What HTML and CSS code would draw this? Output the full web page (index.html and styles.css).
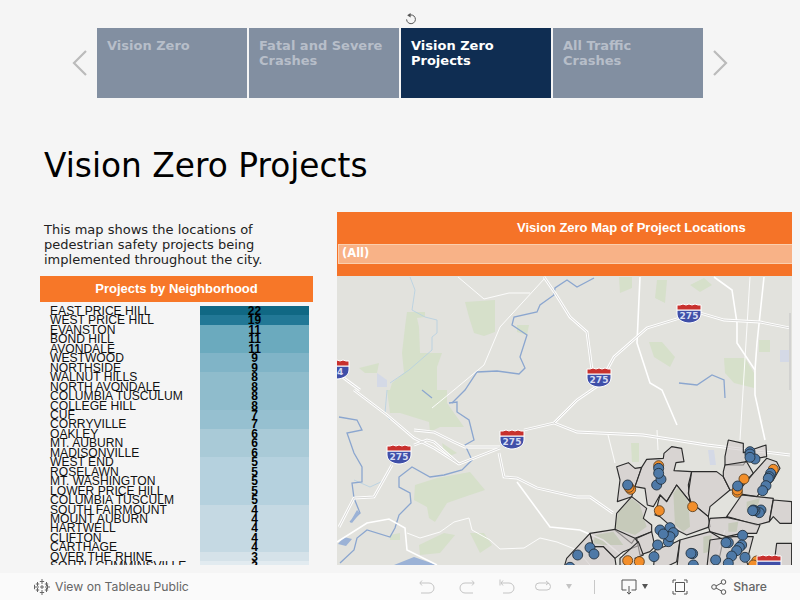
FILE: index.html
```html
<!DOCTYPE html>
<html lang="en">
<head>
<meta charset="utf-8">
<title>Vision Zero Projects</title>
<link rel="stylesheet" href="styles.css">
</head>
<body>
<div class="page">
  <div class="top">
    <div class="revert-row">
      <svg class="icon-revert" width="12" height="14" viewBox="0 0 12 14"><path d="M3.600 3.600A4.400 4.400 0 1 1 1.600 7.400" fill="none" stroke="#555" stroke-width="1"/><path d="M5.600 1v4.400L2.200 3.200z" fill="#555"/></svg>
    </div>
    <nav class="nav">
      <svg class="arrow" width="16" height="28" viewBox="0 0 16 28"><path d="M14 2 2 14l12 12" fill="none" stroke="#bbb" stroke-width="2.200"/></svg>
      <div class="tabs">
        <div class="tab">Vision Zero</div>
        <div class="tab">Fatal and Severe Crashes</div>
        <div class="tab active">Vision Zero Projects</div>
        <div class="tab">All Traffic Crashes</div>
      </div>
      <svg class="arrow" width="16" height="28" viewBox="0 0 16 28"><path d="m2 2 12 12L2 26" fill="none" stroke="#bbb" stroke-width="2.200"/></svg>
    </nav>
    <h1 class="title">Vision Zero Projects</h1>
  </div>
  <main class="content">
    <section class="left">
      <p class="desc">This map shows the locations of pedestrian safety projects being implemented throughout the city.</p>
      <h2 class="left-head">Projects by Neighborhood</h2>
      <div class="table">
        <div class="row"><span class="name">EAST PRICE HILL</span><span class="val v22"><b>22</b></span></div>
        <div class="row"><span class="name">WEST PRICE HILL</span><span class="val v19"><b>19</b></span></div>
        <div class="row"><span class="name">EVANSTON</span><span class="val v11"><b>11</b></span></div>
        <div class="row"><span class="name">BOND HILL</span><span class="val v11"><b>11</b></span></div>
        <div class="row"><span class="name">AVONDALE</span><span class="val v11"><b>11</b></span></div>
        <div class="row"><span class="name">WESTWOOD</span><span class="val v9"><b>9</b></span></div>
        <div class="row"><span class="name">NORTHSIDE</span><span class="val v9"><b>9</b></span></div>
        <div class="row"><span class="name">WALNUT HILLS</span><span class="val v8"><b>8</b></span></div>
        <div class="row"><span class="name">NORTH AVONDALE</span><span class="val v8"><b>8</b></span></div>
        <div class="row"><span class="name">COLUMBIA TUSCULUM</span><span class="val v8"><b>8</b></span></div>
        <div class="row"><span class="name">COLLEGE HILL</span><span class="val v8"><b>8</b></span></div>
        <div class="row"><span class="name">CUF</span><span class="val v7"><b>7</b></span></div>
        <div class="row"><span class="name">CORRYVILLE</span><span class="val v7"><b>7</b></span></div>
        <div class="row"><span class="name">OAKLEY</span><span class="val v6"><b>6</b></span></div>
        <div class="row"><span class="name">MT. AUBURN</span><span class="val v6"><b>6</b></span></div>
        <div class="row"><span class="name">MADISONVILLE</span><span class="val v6"><b>6</b></span></div>
        <div class="row"><span class="name">WEST END</span><span class="val v5"><b>5</b></span></div>
        <div class="row"><span class="name">ROSELAWN</span><span class="val v5"><b>5</b></span></div>
        <div class="row"><span class="name">MT. WASHINGTON</span><span class="val v5"><b>5</b></span></div>
        <div class="row"><span class="name">LOWER PRICE HILL</span><span class="val v5"><b>5</b></span></div>
        <div class="row"><span class="name">COLUMBIA TUSCULM</span><span class="val v5"><b>5</b></span></div>
        <div class="row"><span class="name">SOUTH FAIRMOUNT</span><span class="val v4"><b>4</b></span></div>
        <div class="row"><span class="name">MOUNT AUBURN</span><span class="val v4"><b>4</b></span></div>
        <div class="row"><span class="name">HARTWELL</span><span class="val v4"><b>4</b></span></div>
        <div class="row"><span class="name">CLIFTON</span><span class="val v4"><b>4</b></span></div>
        <div class="row"><span class="name">CARTHAGE</span><span class="val v4"><b>4</b></span></div>
        <div class="row"><span class="name">OVER THE RHINE</span><span class="val v3"><b>3</b></span></div>
        <div class="row"><span class="name">SOUTH CUMMINSVILLE</span><span class="val v2"><b>2</b></span></div>
      </div>
    </section>
    <section class="right">
      <div class="right-head">
        <h2 class="right-title">Vision Zero Map of Project Locations</h2>
        <div class="filter">(All)</div>
      </div>
      <svg class="map" width="455" height="289" viewBox="337 276 455 289">
        <defs>
          <g id="hwy-paths">
            <path d="M544 277 555 293 570 317 587 332 592 370"/>
            <path d="M607 370 614 357 647 328 680 318"/>
            <path d="M700 313 724 320 760 322 790 328"/>
            <path d="M354 390 387 415 414 438 434 448 459 464 500 448"/>
            <path d="M392 465 374 497 354 498 339 527"/>
            <path d="M414 445 427 440 434 442 459 464"/>
            <path d="M414 430 434 432 454 442 465 447 500 447"/>
            <path d="M524 430 554 423 577 400 599 385"/>
            <path d="M554 423 577 432 643 435 707 445 790 455"/>
            <path d="M499 453 504 477 517 478 537 488 577 497 590 497 613 513"/>
            <path d="M337 373 360 390"/>
          </g>
        </defs>
        <rect x="337" y="276" width="455" height="289" fill="#e2e2dd"/>
        <g class="park">
          <path d="M465 302 495 300V332L484 336 474 333 469 317Z"/>
          <path d="M407 312H425V317L417 318 419 327 420 353H442L437 367V390H447V403L464 427H440L430 432 429 422 400 413H390L387 390H390L392 383 404 373 402 353 405 327Z"/>
          <path d="M619 277H632V288L620 293Z"/>
          <path d="M657 280H667L665 303 655 298Z"/>
          <path d="M690 285 704 278 712 285 700 292Z"/>
          <path d="M649 342H662L675 357 670 367 654 357Z"/>
          <path d="M759 340H770V352H759Z"/>
          <path d="M724 358H745L754 373V388L734 383 725 373Z"/>
          <path d="M517 325H529L527 335 517 332Z"/>
          <path d="M359 368 379 363 377 373H365Z"/>
          <path d="M415 485 437 478 470 472 485 490 470 495 447 503 435 522 429 518 427 507 414 500Z"/>
          <path d="M442 443 457 453 447 457 444 452Z"/>
          <path d="M470 533H484L492 545 480 553Z"/>
          <path d="M419 545 444 533 455 535 440 553 420 555Z"/>
          <path d="M390 535 400 533V540H390Z"/>
          <path d="M631 443H639V462H632Z"/>
        </g>
        <g class="park-deep" transform="translate(560 430) scale(.3333)">
          <path d="M175 245 215 205 240 225 260 290 225 315 165 295Z"/>
          <path d="M340 190 355 170 385 215 390 290 370 305 345 285Z"/>
          <path d="M105 315 160 305 190 345 130 345 100 340Z"/>
          <path d="M560 215 600 205 590 240 560 245Z"/>
          <path d="M505 280 535 275 530 305 505 305Z"/>
          <path d="M430 320 455 315 450 365 430 370Z"/>
        </g>
        <g class="lav">
          <path d="M377 373 387 380V387H377Z"/>
          <path d="M780 350H790V362H780Z"/>
          <path d="M708 450H714L716 465H710Z"/>
        </g>
        <g class="stream">
          <path d="M410 277 415 290 412 310 425 317 437 320V333L432 337V350L409 370 390 383"/>
          <path d="M387 390 385 413 390 420"/>
          <path d="M354 480 370 487 385 480"/>
        </g>
        <g class="river">
          <path d="M594 278 577 287 567 280 555 288 554 295 540 305 537 312 514 317 512 325 527 335 520 357 525 368 519 374 497 371 477 372 465 390 452 403"/>
          <path d="M422 390 432 398"/>
          <path d="M449 403 457 402V412L469 420 474 440 465 445 472 460 462 470 444 475 430 477 412 467 399 477V487L410 493 411 503 399 515 395 528 390 537 367 530 357 538 354 550 340 563"/>
          <path d="M339 417 357 420 362 430 347 433 354 453 362 467V482L352 483 354 498 360 513 350 522"/>
          <path d="M679 383 697 385 712 375 724 380 725 398"/>
        </g>
        <path class="water" d="M394 565 414 557 437 565ZM350 522 357 510 360 513 352 523ZM344 537 352 539 346 546 338 544Z"/>
        <g class="road">
          <path d="M458 277 484 299 509 293H530"/>
          <path d="M545 278 500 327 484 365 454 390 432 408"/>
          <path d="M407 533 420 538 440 532 454 522 469 518 472 530 490 540 500 549 524 548 540 538 557 542 577 550 590 565"/>
          <path d="M750 277 740 440"/>
          <path d="M608 435 615 463"/>
          <path d="M657 430 658 450"/>
          <path d="M714 565 725 530"/>
        </g>
        <g class="road-b">
          <path d="M640 277 637 343 650 383 662 390 677 425"/>
          <path d="M714 277 732 290 737 323V343L755 370V395L765 440"/>
          <path d="M764 277 757 343 755 370"/>
          <path d="M337 542 367 523 389 519 405 528 407 550 437 565"/>
          <path d="M517 482 550 527 560 528 580 530 603 540 627 560"/>
        </g>
        <use class="hwy" href="#hwy-paths"/>
        <use class="hwy-core" href="#hwy-paths"/>
        <path class="edge" d="M790 313V390"/>
        <g class="hoods" transform="translate(560 430) scale(.3333)">
          <path d="M170 110 205 98 225 115 245 112 225 170 215 200 172 215 180 150Z"/>
          <path d="M245 112 260 88 310 85 312 70 335 50 365 55 372 95 348 98 342 122 395 125 385 165 390 215 350 165 320 215 300 195 280 230 262 225 255 175 225 170Z"/>
          <path d="M395 125 470 125 490 140 510 180 450 230 445 260 415 235 395 225 385 190Z"/>
          <path d="M165 300 170 250 215 200 260 235 250 265 275 285 275 305 225 325 215 340 165 300Z"/>
          <path d="M320 215 350 165 390 215 395 225 415 235 445 260 450 290 380 315 340 295 300 260 285 255 300 195Z"/>
          <path d="M90 310 165 298 225 325 240 345 190 365 165 385 130 350 100 350Z"/>
          <path d="M495 80 505 30 550 40V68L618 45 620 80 560 90 550 105H495Z"/>
          <path d="M495 105 560 95 580 130 530 180H510L490 140V125Z"/>
          <path d="M620 85 650 95 660 115 640 150 590 200 530 190 580 130Z"/>
          <path d="M500 260 545 195 640 205 628 275 590 285 520 265Z"/>
          <path d="M640 210 695 215V280H660L640 260 628 275Z"/>
          <path d="M445 290 450 265 500 262 535 270 600 285 590 310 545 310 500 320 450 305Z"/>
          <path d="M230 325 275 305 285 350 270 365 240 375Z"/>
          <path d="M180 385 235 335 250 375 225 385 240 420H180Z"/>
          <path d="M285 360 340 340 360 330 350 395 300 420H280Z"/>
          <path d="M360 330 450 305 490 330 470 420H350Z"/>
          <path d="M450 330 520 320 580 320 560 395 570 420H440Z"/>
          <path d="M20 385 90 310 100 350 130 350 165 385 170 420H10Z"/>
          <path d="M650 340H695V420H640Z"/>
        </g>
        <g class="pts" transform="translate(560 430) scale(.3333)">
          <circle class="o" cx="212" cy="178" r="15"/><circle class="o" cx="207" cy="172" r="15"/><circle class="b" cx="203" cy="165" r="15"/>
          <circle class="o" cx="296" cy="107" r="15"/><circle class="b" cx="296" cy="115" r="15"/><circle class="b" cx="290" cy="165" r="15"/><circle class="b" cx="303" cy="148" r="15"/><circle class="b" cx="296" cy="130" r="15"/>
          <circle class="o" cx="298" cy="242" r="15"/><circle class="o" cx="398" cy="230" r="15"/><circle class="o" cx="552" cy="147" r="15"/><circle class="o" cx="640" cy="118" r="15"/>
          <circle class="o" cx="532" cy="187" r="15"/><circle class="o" cx="532" cy="180" r="15"/><circle class="b" cx="533" cy="168" r="15"/>
          <circle class="b" cx="570" cy="65" r="15"/><circle class="b" cx="570" cy="72" r="15"/><circle class="b" cx="585" cy="87" r="15"/><circle class="b" cx="570" cy="82" r="15"/>
          <circle class="b" cx="632" cy="130" r="15"/><circle class="b" cx="628" cy="140" r="15"/><circle class="b" cx="625" cy="145" r="15"/><circle class="b" cx="618" cy="167" r="15"/><circle class="b" cx="608" cy="182" r="15"/>
          <circle class="b" cx="603" cy="240" r="15"/><circle class="b" cx="598" cy="248" r="15"/><circle class="b" cx="585" cy="242" r="15"/><circle class="b" cx="580" cy="240" r="15"/><circle class="b" cx="578" cy="242" r="15"/>
          <circle class="b" cx="300" cy="300" r="15"/><circle class="b" cx="330" cy="293" r="15"/><circle class="b" cx="340" cy="308" r="15"/><circle class="b" cx="325" cy="335" r="15"/><circle class="b" cx="330" cy="320" r="15"/><circle class="b" cx="310" cy="312" r="15"/>
          <circle class="b" cx="293" cy="345" r="15"/><circle class="b" cx="90" cy="353" r="15"/><circle class="b" cx="102" cy="372" r="15"/><circle class="b" cx="53" cy="375" r="15"/><circle class="b" cx="282" cy="380" r="15"/>
          <circle class="b" cx="398" cy="371" r="15"/><circle class="b" cx="393" cy="370" r="15"/><circle class="b" cx="400" cy="405" r="15"/><circle class="b" cx="467" cy="390" r="15"/>
          <circle class="b" cx="505" cy="338" r="15"/><circle class="b" cx="498" cy="338" r="15"/><circle class="b" cx="548" cy="316" r="15"/><circle class="b" cx="545" cy="345" r="15"/><circle class="b" cx="538" cy="352" r="15"/><circle class="b" cx="530" cy="362" r="15"/><circle class="b" cx="515" cy="378" r="15"/><circle class="b" cx="505" cy="400" r="15"/><circle class="b" cx="555" cy="382" r="15"/>
          <circle class="o" cx="203" cy="392" r="15"/><circle class="o" cx="238" cy="395" r="15"/><circle class="o" cx="590" cy="393" r="15"/><circle class="o" cx="580" cy="405" r="15"/><circle class="b" cx="30" cy="412" r="15"/>
        </g>
        <g class="shield" transform="translate(689 314)">
          <path class="s-blue" d="M-12-4H12V0C12 6 5 9 0 9-5 9-12 6-12 0Z"/><path class="s-red" d="M-12-4V-9L-9-9-6-10-3-9 0-10 3-9 6-10 9-9 12-9V-4Z"/><text class="s-text" y="4.500">275</text>
        </g>
        <g class="shield" transform="translate(599 378)">
          <path class="s-blue" d="M-12-4H12V0C12 6 5 9 0 9-5 9-12 6-12 0Z"/><path class="s-red" d="M-12-4V-9L-9-9-6-10-3-9 0-10 3-9 6-10 9-9 12-9V-4Z"/><text class="s-text" y="4.500">275</text>
        </g>
        <g class="shield" transform="translate(399 455)">
          <path class="s-blue" d="M-12-4H12V0C12 6 5 9 0 9-5 9-12 6-12 0Z"/><path class="s-red" d="M-12-4V-9L-9-9-6-10-3-9 0-10 3-9 6-10 9-9 12-9V-4Z"/><text class="s-text" y="4.500">275</text>
        </g>
        <g class="shield" transform="translate(512 440)">
          <path class="s-blue" d="M-12-4H12V0C12 6 5 9 0 9-5 9-12 6-12 0Z"/><path class="s-red" d="M-12-4V-9L-9-9-6-10-3-9 0-10 3-9 6-10 9-9 12-9V-4Z"/><text class="s-text" y="4.500">275</text>
        </g>
        <g class="shield" transform="translate(337 370)">
          <path class="s-blue" d="M-12-4H12V0C12 6 5 9 0 9-5 9-12 6-12 0Z"/><path class="s-red" d="M-12-4V-9L-9-9-6-10-3-9 0-10 3-9 6-10 9-9 12-9V-4Z"/><text class="s-text" y="4.500">74</text>
        </g>
        <g class="shield" transform="translate(769 565)">
          <path class="s-blue" d="M-12-4H12V0C12 6 5 9 0 9-5 9-12 6-12 0Z"/><path class="s-red" d="M-12-4V-9L-9-9-6-10-3-9 0-10 3-9 6-10 9-9 12-9V-4Z"/>
        </g>
      </svg>
    </section>
  </main>
  <footer class="toolbar">
    <div class="tb-left">
      <svg width="18" height="18" viewBox="0 0 18 18" class="logo"><path d="M9 1v5M6.800 3.500h4.400M9 12v5M6.800 14.500h4.400M1 9h5M1.500 6.800v4.400M12 9h5M14.500 6.800v4.400M4.500 4v4M2.800 6h3.400M13.500 4v4M11.800 6h3.400M4.500 10v4M2.800 12h3.400M13.500 10v4M11.800 12h3.400M9 7v4M7 9h4" fill="none" stroke="#666" stroke-width="1"/></svg>
      <span class="tb-link">View on Tableau Public</span>
    </div>
    <div class="tb-right">
      <svg class="ic off" width="16" height="16" viewBox="0 0 16 16"><path d="M1 4h9a5 5 0 0 1 5 5 5 5 0 0 1-5 5H2M3 1.500 .8 4 3 6.500" /></svg>
      <svg class="ic off gap24" width="16" height="16" viewBox="0 0 16 16"><path d="M15 4H6a5 5 0 0 0-5 5 5 5 0 0 0 5 5h8M13 1.500 15.200 4 13 6.500" /></svg>
      <svg class="ic off gap24" width="16" height="16" viewBox="0 0 16 16"><path d="M1 .5v6M2 4h8a5 5 0 0 1 5 5 5 5 0 0 1-5 5H4M4 1.500 2 4l2 2.500" /></svg>
      <svg class="ic off gap20" width="16" height="16" viewBox="0 0 16 16"><path d="M12 4H4a3.500 3.500 0 0 0 0 7h8a3.500 3.500 0 0 0 0-7M11 2l2.500 2L11 6" /></svg>
      <span class="caret caret-off"></span>
      <span class="sep"></span>
      <svg class="ic on" width="16" height="16" viewBox="0 0 16 16"><path d="M5.500 11H1V1h14v10h-4.500M8 7v8M6 13l2 2.200L10 13" /></svg>
      <span class="caret caret-on"></span>
      <svg class="ic on gap24" width="16" height="16" viewBox="0 0 16 16"><path d="M1 4V1h3M12 1h3v3M15 12v3h-3M4 15H1v-3M3.500 3.500h9v9h-9z" /></svg>
      <svg class="ic on gap22" width="16" height="16" viewBox="0 0 16 16"><circle cx="3" cy="8" r="2.300"/><circle cx="12.500" cy="3" r="2.300"/><circle cx="12.500" cy="13" r="2.300"/><path d="M5 7 10.500 4M5 9l5.500 3"/></svg>
      <span class="tb-link share">Share</span>
    </div>
  </footer>
</div>
</body>
</html>
```
FILE: styles.css
```css
* { box-sizing: border-box; }
html, body { margin: 0; padding: 0; }
body { background: #f5f5f5; font-family: "DejaVu Sans", sans-serif; }
.page { width: 800px; height: 600px; overflow: hidden; display: flex; flex-direction: column; }

.revert-row { height: 28px; display: flex; justify-content: center; align-items: flex-end; padding: 0 0 2px 22px; }
.nav { display: flex; justify-content: center; align-items: center; height: 70px; gap: 9px; }
.arrow { display: block; }
.tabs { display: flex; gap: 2px; }
.tab { width: 150px; height: 70px; padding: 10px 10px 0; background: #828fa1; color: #b7bec9; font-size: 13px; font-weight: 700; line-height: 15px; }
.tab.active { background: #0f2d52; color: #fff; }
.title { margin: 0; padding: 49px 0 0 44px; height: 114px; font-size: 32.800px; font-weight: 400; line-height: 38px; color: #000; }

.content { flex: 1; min-height: 0; display: flex; gap: 24px; padding-left: 40px; }
.left { width: 273px; display: flex; flex-direction: column; }
.desc { margin: 0; height: 64px; padding: 10px 0 0 4px; font-size: 13px; line-height: 15px; color: #222; }
.left-head { margin: 0; height: 26px; background: #f77728; color: #fff; font: 700 13px/25px "Liberation Sans", sans-serif; text-align: center; }
.table { height: 263px; padding-top: 4px; overflow: hidden; }
.row { display: grid; grid-template-columns: 160px 109px; height: 9.460px; font: 12.100px/11.460px "Liberation Sans", sans-serif; color: #111; }
.name { padding-left: 10px; white-space: nowrap; }
.val { height: 9.460px; text-align: center; }
.val b { position: relative; font-weight: 700; font-size: 12px; color: #000; }
.v22 { background: #106884; }
.v19 { background: #227896; }
.v11 { background: #6baabe; }
.v9 { background: #80b4c7; }
.v8 { background: #8fbccc; }
.v7 { background: #96c0d0; }
.v6 { background: #a9cad7; }
.v5 { background: #b5d1de; }
.v4 { background: #c5d9e3; }
.v3 { background: #d5e2e9; }
.v2 { background: #e2ebf0; }

.right { width: 455px; display: flex; flex-direction: column; }
.right-head { height: 64px; background: #f57328; padding-top: 1px; }
.right-title { margin: 0; height: 31px; font: 700 13px/30px "Liberation Sans", sans-serif; color: #fff; padding-left: 180px; white-space: nowrap; }
.filter { height: 20px; margin-left: 1px; background: #f8b287; border: 1px solid #fbcfae; border-right: 0; padding-left: 3px; font: 700 11.500px/17px "DejaVu Sans", sans-serif; color: #fff; }
.map { display: block; }

.park path { fill: #d6e0ca; }
.park-deep path { fill: #b3c9a0; }
.lav path { fill: #d4d9e6; }
.stream path { fill: none; stroke: #b4cfe2; stroke-width: .8; }
.river path { fill: none; stroke: #8ba6cf; stroke-width: 1.300; }
.water { fill: #9bb2d6; }
.road path { fill: none; stroke: #fff; stroke-width: 1; opacity: .9; }
.road-b path { fill: none; stroke: #fff; stroke-width: 1.600; }
.hwy { fill: none; stroke: #fff; stroke-width: 2.800; }
.hwy-core { fill: none; stroke: #d5d5d2; stroke-width: .9; }
.edge { fill: none; stroke: #d2d2d0; stroke-width: 2; }
.hoods path { fill: #d2cccb; fill-opacity: .6; stroke: #2b2b2b; stroke-width: 3.400; stroke-linejoin: round; }
.pts circle { stroke: #22303c; stroke-width: 2.600; }
.pts .b { fill: #4e79a7; }
.pts .o { fill: #f28e2b; stroke: #5a4020; }
.s-blue { fill: #3f4fa8; stroke: #fff; stroke-width: 1; }
.s-red { fill: #c8312e; stroke: #fff; stroke-width: 1; }
.s-text { font: 700 9px "DejaVu Sans", sans-serif; fill: #d6dcf2; text-anchor: middle; }

.toolbar { height: 27px; margin-top: 8px; background: #fafafa; display: flex; justify-content: space-between; align-items: center; padding: 0 33px 0 33px; flex: none; }
.tb-left { display: flex; align-items: center; gap: 4px; }
.tb-right { display: flex; align-items: center; }
.tb-link { font: 12.200px "Inter", sans-serif; color: #666; }
.logo { display: block; }
.ic { display: block; fill: none; stroke-width: 1; }
.off { stroke: #c4c4c4; }
.on { stroke: #555; }
.gap24 { margin-left: 24px; }
.gap20 { margin-left: 20px; }
.gap22 { margin-left: 23px; }
.caret { width: 0; height: 0; border-left: 3.500px solid transparent; border-right: 3.500px solid transparent; border-top: 5px solid #555; }
.caret-off { margin-left: 15px; border-top-color: #c4c4c4; }
.caret-on { margin-left: 5px; }
.sep { width: 1px; height: 14px; background: #c8c8c8; margin: 0 26px 0 22px; }
.share { margin-left: 6px; font-weight: 500; }
```
